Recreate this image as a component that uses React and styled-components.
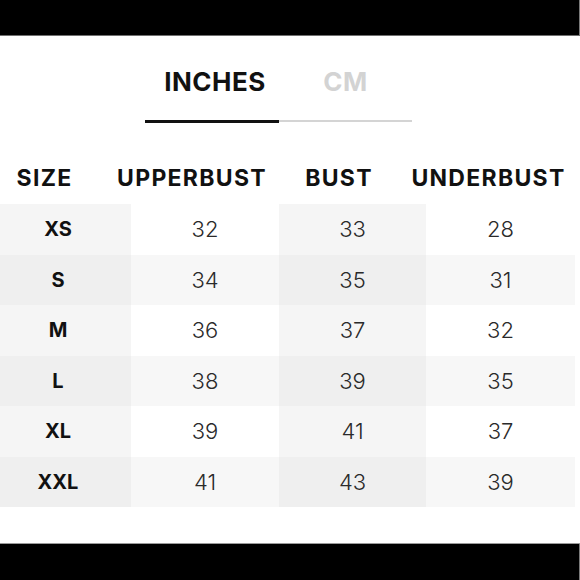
import React, { useState } from 'react';
import styled, { createGlobalStyle } from 'styled-components';

const GlobalStyle = createGlobalStyle`
  html, body {
    margin: 0;
    padding: 0;
    background: #ffffff;
  }
  body {
    font-family: Inter, "Open Sans", "Liberation Sans", sans-serif;
    color: #111111;
  }
`;

const Page = styled.div`
  width: 580px;
  height: 580px;
  display: flex;
  flex-direction: column;
  overflow: hidden;
`;

const Bar = styled.div`
  height: ${(p) => p.$height}px;
  background: #000000;
  flex-shrink: 0;
  box-shadow: ${(p) => (p.$top ? 'inset 0 -1px 0 #6f6f6f' : 'inset 0 1px 0 #9a9a9a')}, inset -1px 0 0 #7a7a7a;
`;

const Content = styled.div`
  flex: 1;
  display: flex;
  flex-direction: column;
`;

const Tabs = styled.div`
  display: flex;
  margin: 30px 0 0 145px;
  width: 267px;
`;

const Tab = styled.button`
  width: ${(p) => (p.$active ? 134 : 133)}px;
  background: none;
  border: none;
  padding: 0 0 22px;
  margin: 0;
  font-family: Inter, "Liberation Sans", sans-serif;
  font-weight: 700;
  font-size: 26px;
  letter-spacing: 0.5px;
  line-height: 32px;
  cursor: pointer;
  color: ${(p) => (p.$active ? '#111111' : '#d3d3d3')};
  border-bottom: ${(p) => (p.$active ? '3px solid #111111' : '2px solid #d4d4d4')};
  margin-bottom: ${(p) => (p.$active ? '0' : '1px')};
  padding-left: ${(p) => (p.$active ? '6px' : '0')};
`;

const Table = styled.div`
  display: grid;
  grid-template-columns: 131px 148px 147px 149px;
  margin-top: ${(p) => p.$gap}px;
`;

const HeadCell = styled.div`
  height: 30px;
  display: flex;
  align-items: center;
  justify-content: center;
  padding-right: ${(p) => p.$shift}px;
  font-weight: 700;
  font-size: 23px;
  letter-spacing: 1.3px;
  color: #111111;
`;

const Cell = styled.div`
  height: 50.5px;
  display: flex;
  align-items: center;
  justify-content: center;
  padding-right: ${(p) => (p.$label ? 15 : 0)}px;
  background: ${(p) => {
    const odd = p.$row % 2 === 1;
    const dark = p.$col % 2 === 0;
    if (odd) return dark ? '#efefef' : '#f7f7f7';
    return dark ? '#f5f5f5' : '#ffffff';
  }};
  font-size: ${(p) => (p.$label ? 20 : 22)}px;
  font-weight: ${(p) => (p.$label ? 700 : 300)};
  color: ${(p) => (p.$label ? '#111111' : '#2a2a2a')};
`;

const Spacer = styled.div`
  flex: 1;
`;

const headers = [
  { text: 'SIZE', shift: 42 },
  { text: 'UPPERBUST', shift: 26 },
  { text: 'BUST', shift: 27 },
  { text: 'UNDERBUST', shift: 24 },
];

const rows = [
  ['XS', 32, 33, 28],
  ['S', 34, 35, 31],
  ['M', 36, 37, 32],
  ['L', 38, 39, 35],
  ['XL', 39, 41, 37],
  ['XXL', 41, 43, 39],
];

const App = () => {
  const [unit, setUnit] = useState('in');

  return (
    <Page>
      <GlobalStyle />
      <Bar $height={36} $top />
      <Content>
        <Tabs>
          <Tab $active={unit === 'in'} onClick={() => setUnit('in')}>INCHES</Tab>
          <Tab $active={unit === 'cm'} onClick={() => setUnit('cm')}>CM</Tab>
        </Tabs>
        <Table $gap={40}>
          {headers.map((h) => (
            <HeadCell key={h.text} $shift={h.shift}>{h.text}</HeadCell>
          ))}
        </Table>
        <Table $gap={11}>
          {rows.map((r, ri) =>
            r.map((v, ci) => (
              <Cell key={ri + '-' + ci} $row={ri} $col={ci} $label={ci === 0}>
                {v}
              </Cell>
            ))
          )}
        </Table>
        <Spacer />
      </Content>
      <Bar $height={37} />
    </Page>
  );
};

export default App;
